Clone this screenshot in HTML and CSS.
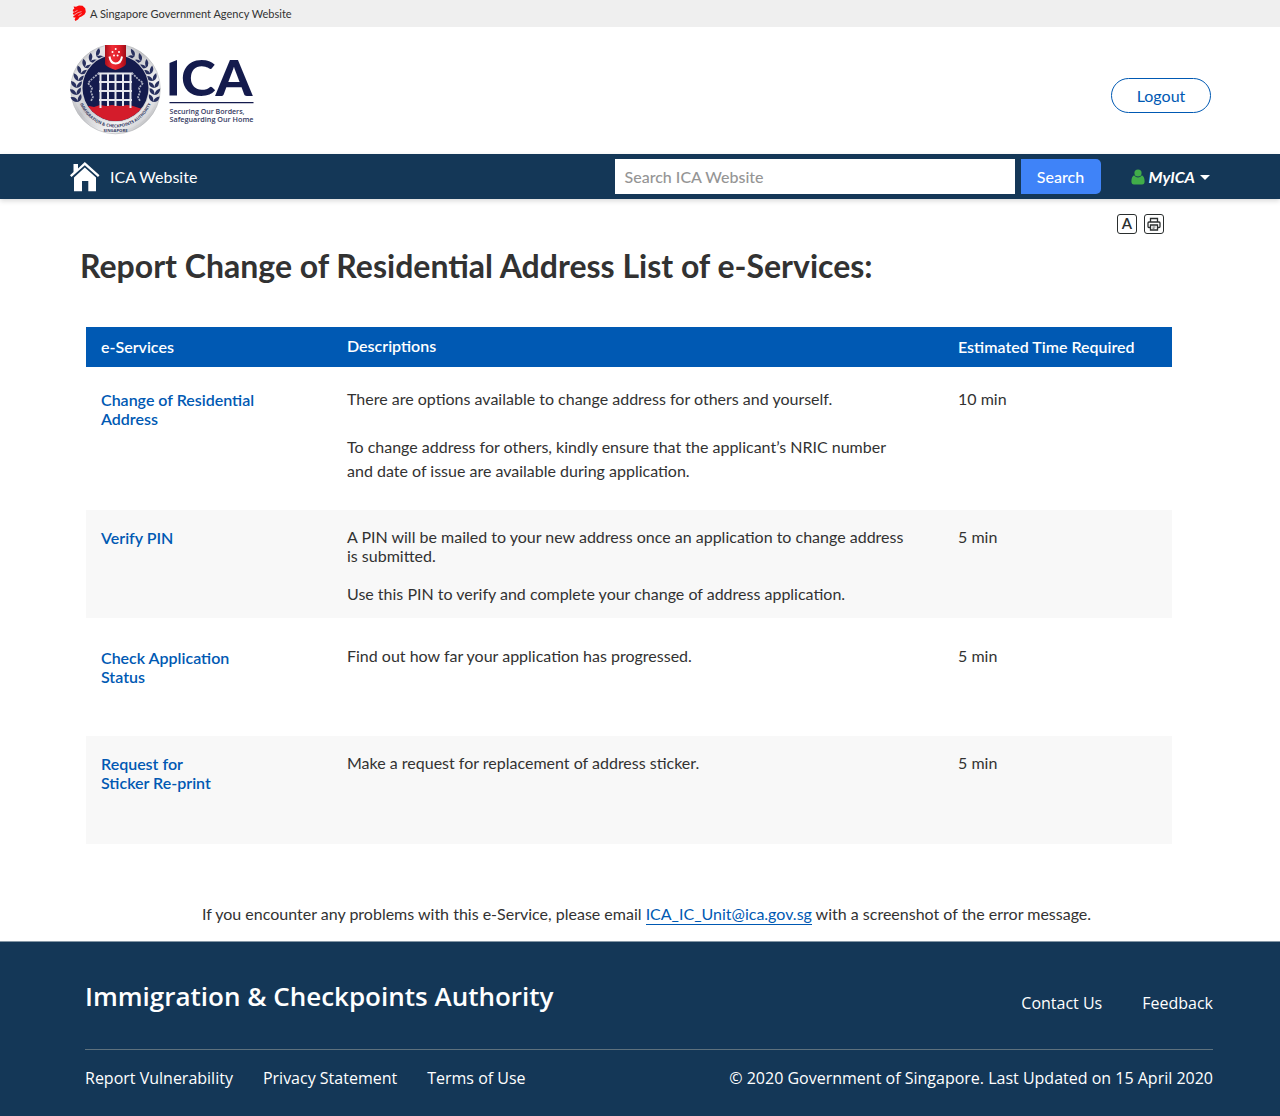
FILE: index.html
```html
<!DOCTYPE html>
<html lang="en">
<head>
<meta charset="utf-8">
<title>ICA - Report Change of Residential Address</title>
<link rel="stylesheet" href="styles.css">
</head>
<body>
<div class="masthead">
  <svg class="lion" width="14" height="16" viewBox="0 0 14 16" aria-hidden="true">
    <path fill="#fb0b0b" d="M1.600 1.600 4 1.800 7 .4 10.500 .8 13.200 3.200 13.800 7 12.500 9.600 9.500 11.400 7.600 12.300 6 14.600 3.400 16 2.600 14.600 3.600 12.600 1.600 12.400 1.200 11.200 3.600 9.800 1.200 9.600 .8 8 2.400 7 .8 6.200 1 4.600 2.400 4z"/>
    <path fill="none" stroke="#efefef" stroke-width=".6" d="M2.500 6.900 5.500 5.400M3 9.500 6 7.600 9.500 6.600M6.400 10.600 9.600 8.600"/>
  </svg>
  <span>A Singapore Government Agency Website</span>
</div>

<header class="header">
  <svg class="logo" width="184" height="92" viewBox="0 0 184 92" role="img" aria-label="ICA">
    <defs>
      <linearGradient id="silver" x1="0" y1="0" x2="1" y2="1">
        <stop offset="0" stop-color="#85868b"/><stop offset=".2" stop-color="#e4e4e6"/>
        <stop offset=".45" stop-color="#bfc0c4"/><stop offset=".7" stop-color="#f7f7f8"/><stop offset="1" stop-color="#96979b"/>
      </linearGradient>
      <linearGradient id="ribbon"><stop offset="0" stop-color="#a90f1b"/><stop offset=".35" stop-color="#f02c35"/><stop offset=".7" stop-color="#dc1c28"/><stop offset="1" stop-color="#9d0d18"/></linearGradient>
      <clipPath id="disc"><circle cx="45.500" cy="43" r="33"/></clipPath>
      <path id="arc" d="M9.300 57A38.500 38.500 0 0 0 81.700 57"/>
      <g id="leaf"><path d="M0 0Q-5.500-1-6-6.500Q0-6 0 0M0 0Q5.500-1 5-7Q0-5 0 0"/></g>
    </defs>
    <circle cx="45.500" cy="44" r="44.800" fill="url(#silver)" stroke="#b4b5b9" stroke-width=".6"/>
    <circle cx="45.500" cy="44" r="42" fill="#ececee" fill-opacity=".3"/>
    <g fill="#28305f">
      <use href="#leaf" transform="translate(8 57) rotate(-15)"/><use href="#leaf" transform="translate(6.500 50) rotate(-6)"/>
      <use href="#leaf" transform="translate(6.500 43) rotate(4)"/><use href="#leaf" transform="translate(8 36) rotate(14)"/>
      <use href="#leaf" transform="translate(10.500 29) rotate(24)"/><use href="#leaf" transform="translate(14.500 22.500) rotate(36)"/>
      <use href="#leaf" transform="translate(20 16.500) rotate(48)"/><use href="#leaf" transform="translate(26.500 11.500) rotate(60)"/>
      <use href="#leaf" transform="translate(83 57) rotate(15)"/><use href="#leaf" transform="translate(84.500 50) rotate(6)"/>
      <use href="#leaf" transform="translate(84.500 43) rotate(-4)"/><use href="#leaf" transform="translate(83 36) rotate(-14)"/>
      <use href="#leaf" transform="translate(80.500 29) rotate(-24)"/><use href="#leaf" transform="translate(76.500 22.500) rotate(-36)"/>
      <use href="#leaf" transform="translate(71 16.500) rotate(-48)"/><use href="#leaf" transform="translate(64.500 11.500) rotate(-60)"/>
    </g>
    <circle cx="45.500" cy="43" r="34" fill="#d0d1d6"/>
    <circle cx="45.500" cy="43" r="33" fill="#141b4d"/>
    <path clip-path="url(#disc)" fill="#d41c2b" d="M10 64l9-3 5 1 6-2 6 1 6-1 8 1 7-1 6 1 6 2 12 3v20H10z"/>
    <g fill="none" stroke="#e6e7ee" stroke-width="2">
      <path d="M30.500 28v35M38 28v33M45.500 28v33M53 28v33M60.500 28v35"/>
      <path d="M28 28.500h35M29 37h33M29 46h33M29 55h33" stroke-width="1.800"/>
    </g>
    <path fill="none" stroke="#a9adbf" stroke-width="1.700" stroke-dasharray="2 1" d="M29 28l-7 6-4 4 4 5-1 4 2 5-2 4M62 28l6 6 5 4-4 5 1 4-2 5 2 4"/>
    <path fill="url(#ribbon)" d="M35 0h21v19q-1 3-10.500 6Q36 22 35 19z"/>
    <path fill="none" stroke="#fff" stroke-width="2" d="M39.500 11.500q1 7 6.200 7t6.300-7"/>
    <g fill="#fff"><circle cx="45.700" cy="4" r="1"/><circle cx="42.500" cy="7" r="1"/><circle cx="49" cy="7" r="1"/><circle cx="44" cy="10.500" r="1"/><circle cx="47.600" cy="10.500" r="1"/></g>
    <text class="seal-text"><textPath href="#arc" startOffset="50%" text-anchor="middle">IMMIGRATION &amp; CHECKPOINTS AUTHORITY</textPath></text>
    <text class="seal-text" text-anchor="middle" x="45.500" y="87">SINGAPORE</text>
    <path fill="#141b4d" d="M99.500 18 107 15V50.500H99.500z"/>
    <text class="logo-name" x="111" y="50.500" textLength="71.500" lengthAdjust="spacingAndGlyphs">CA</text>
    <path fill="#141b4d" d="M99.500 57h84v1.300h-84z"/>
    <text class="logo-tag" x="99.500" y="69.400" textLength="75" lengthAdjust="spacingAndGlyphs">Securing Our Borders,</text>
    <text class="logo-tag" x="99.500" y="77.300" textLength="84" lengthAdjust="spacingAndGlyphs">Safeguarding Our Home</text>
  </svg>
  <a class="logout">Logout</a>
</header>

<nav class="nav">
  <a class="home">
    <svg width="30" height="31" viewBox="0 0 30 31" aria-hidden="true">
      <path fill="#fff" d="M3.500 3H8v4.500L14.800 1 29.500 14.300 28 16 14.800 4.200 1.500 16 0 14.300 3.500 11z"/>
      <path fill="#fff" d="M14.800 6.500 26 16.400V30.300H18.300V20H12v10.300H4V16.400z"/>
    </svg>
    <span>ICA Website</span>
  </a>
  <div class="search">
    <div class="search-field">Search ICA Website</div>
    <div class="search-btn">Search</div>
  </div>
  <a class="myica">
    <svg width="14" height="16" viewBox="0 0 14 16" aria-hidden="true">
      <path fill="#41ad49" d="M3 6.200Q7 10.600 11 6.200Q13.600 7.500 13.600 12.500Q13.600 15.500 11 15.500H3Q.4 15.500.4 12.500Q.4 7.500 3 6.200z"/><circle cx="7" cy="4" r="3.600" fill="#41ad49"/>
    </svg>
    <span>MyICA</span>
    <i class="caret"></i>
  </a>
</nav>

<main class="main">
  <div class="tools">
    <span class="tool">A</span>
    <span class="tool">
      <svg width="14" height="14" viewBox="0 0 14 14" fill="none" stroke="#2a2e2e" stroke-width="1.300" aria-hidden="true">
        <path d="M3.500 5V1.500h7V5M3.500 10.500H1.900Q1 10.500 1 9.500V6Q1 5 2 5H12Q13 5 13 6V9.500Q13 10.500 12 10.500H10.500M3.500 8h7v5h-7z"/><path stroke-width=".7" d="M5.500 10h3M5.500 11.300h2"/>
      </svg>
    </span>
  </div>
  <h1>Report Change of Residential Address List of e-Services:</h1>

  <div class="table">
    <div class="row row-head">
      <div>e-Services</div><div class="head-desc">Descriptions</div><div>Estimated Time Required</div>
    </div>
    <div class="row row-address">
      <a class="service">Change of Residential<br>Address</a>
      <div class="desc loose"><p>There are options available to change address for others and yourself.</p><p>To change address for others, kindly ensure that the applicant’s NRIC number<br>and date of issue are available during application.</p></div>
      <div class="time loose">10 min</div>
    </div>
    <div class="row row-pin shaded">
      <a class="service">Verify PIN</a>
      <div class="desc"><p>A PIN will be mailed to your new address once an application to change address<br>is submitted.</p><p>Use this PIN to verify and complete your change of address application.</p></div>
      <div class="time">5 min</div>
    </div>
    <div class="row row-status">
      <a class="service">Check Application<br>Status</a>
      <div class="desc">Find out how far your application has progressed.</div>
      <div class="time">5 min</div>
    </div>
    <div class="row row-reprint shaded">
      <a class="service">Request for<br>Sticker Re-print</a>
      <div class="desc">Make a request for replacement of address sticker.</div>
      <div class="time">5 min</div>
    </div>
  </div>

  <p class="help">If you encounter any problems with this e-Service, please email <a>ICA_IC_Unit@ica.gov.sg</a> with a screenshot of the error message.</p>
</main>

<footer class="footer">
  <div class="footer-top">
    <div class="footer-title">Immigration &amp; Checkpoints Authority</div>
    <div class="footer-contact"><a>Contact Us</a><a>Feedback</a></div>
  </div>
  <div class="footer-bottom">
    <div class="footer-links"><a>Report Vulnerability</a><a>Privacy Statement</a><a>Terms of Use</a></div>
    <div>© 2020 Government of Singapore. Last Updated on 15 April 2020</div>
  </div>
</footer>
</body>
</html>
```
FILE: styles.css
```css
* { box-sizing: border-box; }
body {
  margin: 0;
  height: 1116px;
  display: flex;
  flex-direction: column;
  background: #fff;
  color: #323232;
  font: 16px/19px Lato, "Liberation Sans", sans-serif;
}
p, h1 { margin: 0; }
svg { display: block; flex: none; }

.masthead {
  height: 27px;
  padding: 1px 72px 0;
  display: flex;
  align-items: center;
  gap: 4px;
  background: #efefef;
  font-size: 11px;
  line-height: 14px;
}
.lion { margin-bottom: 2px; }

.header {
  height: 127px;
  padding: 18px 69px 0 70px;
  display: flex;
  justify-content: space-between;
  align-items: flex-start;
}
.logo { overflow: hidden; }
.logo-name { font: 900 49px Lato, sans-serif; fill: #141b4d; }
.logo-tag { font: 600 7.200px "Open Sans", sans-serif; fill: #34395f; }
.seal-text { font: 700 4.200px "Open Sans", sans-serif; fill: #343a62; }
.logout {
  width: 100px;
  height: 35px;
  margin-top: 33px;
  padding-top: 7px;
  border: 1px solid #0059b3;
  border-radius: 18px;
  color: #0059b3;
  text-align: center;
}

.nav {
  height: 45px;
  padding: 0 70px;
  display: flex;
  align-items: center;
  background: #143757;
  color: #fff;
  box-shadow: 0 2px 5px rgba(0, 0, 0, .15);
}
.home { display: flex; align-items: center; gap: 10px; width: 545px; }
.search { display: flex; gap: 6px; font-weight: 500; }
.search-field { width: 400px; height: 35px; padding: 8px 10px; background: #fff; color: #959595; }
.search-btn { width: 80px; height: 35px; padding-top: 8px; background: #3f83f8; border-radius: 0 5px 5px 0; text-align: center; }
.myica { display: flex; align-items: center; margin-left: 29px; font-weight: 700; font-style: italic; }
.myica svg { margin: 1px 0 0 1px; }
.myica span { margin: 0 5px 0 4px; }
.caret { border: 5px solid transparent; border-top-color: #fff; border-bottom: 0; margin-top: 1px; }

.main { height: 742px; padding-top: 15px; }
.tools { display: flex; justify-content: flex-end; gap: 7px; padding-right: 116px; }
.tool {
  width: 20px;
  height: 20px;
  display: flex;
  align-items: center;
  justify-content: center;
  border: 1px solid #2a2e2e;
  border-radius: 3px;
  color: #2a2e2e;
  font-size: 15px;
  line-height: 17px;
  padding-bottom: 1px;
  font-weight: 600;
}
.tool svg { margin-top: 1px; }
h1 { margin: 12px 0 0 80px; font-size: 32px; line-height: 40px; font-weight: 700; }

.table { width: 1086px; margin: 41px 0 0 86px; }
.row { display: grid; grid-template-columns: 246px 611px 1fr; align-items: start; padding: 0 15px; }
.row-head { height: 40px; padding-top: 10px; background: #0059b3; color: #fff; font-weight: 600; }
.head-desc { margin-top: -1px; }
.shaded { background: #f8f8f8; }
.service { color: #0059b3; font-weight: 600; padding-top: 1px; }
.row-address { height: 143px; padding-top: 22px; }
.loose { line-height: 24px; margin-top: -2px; }
.loose p + p { margin-top: 24px; }
.row-pin { height: 108px; padding-top: 17px; }
.desc:not(.loose) p + p { margin-top: 19px; }
.row-status { height: 118px; padding-top: 28px; }
.row-status .service { padding-top: 2px; }
.row-reprint { height: 108px; padding-top: 17px; }

.help { margin: 60px 0 0 202px; }
.help a { color: #0059b3; border-bottom: 1px solid #0059b3; padding-bottom: 1px; }

.footer {
  height: 175px;
  padding: 0 67px 0 85px;
  border-top: 1px solid #8496a5;
  background: #143757;
  color: #fff;
  font-family: "Open Sans", "Noto Sans", sans-serif;
}
.footer-top, .footer-bottom { display: flex; justify-content: space-between; }
.footer-top { height: 108px; padding-top: 35px; border-bottom: 1px solid #5e717d; }
.footer-title { font-size: 26px; line-height: 38px; font-weight: 600; }
.footer-contact { display: flex; gap: 40px; padding-top: 17px; }
.footer-bottom { padding-top: 19px; }
.footer-links { display: flex; gap: 30px; }
```
